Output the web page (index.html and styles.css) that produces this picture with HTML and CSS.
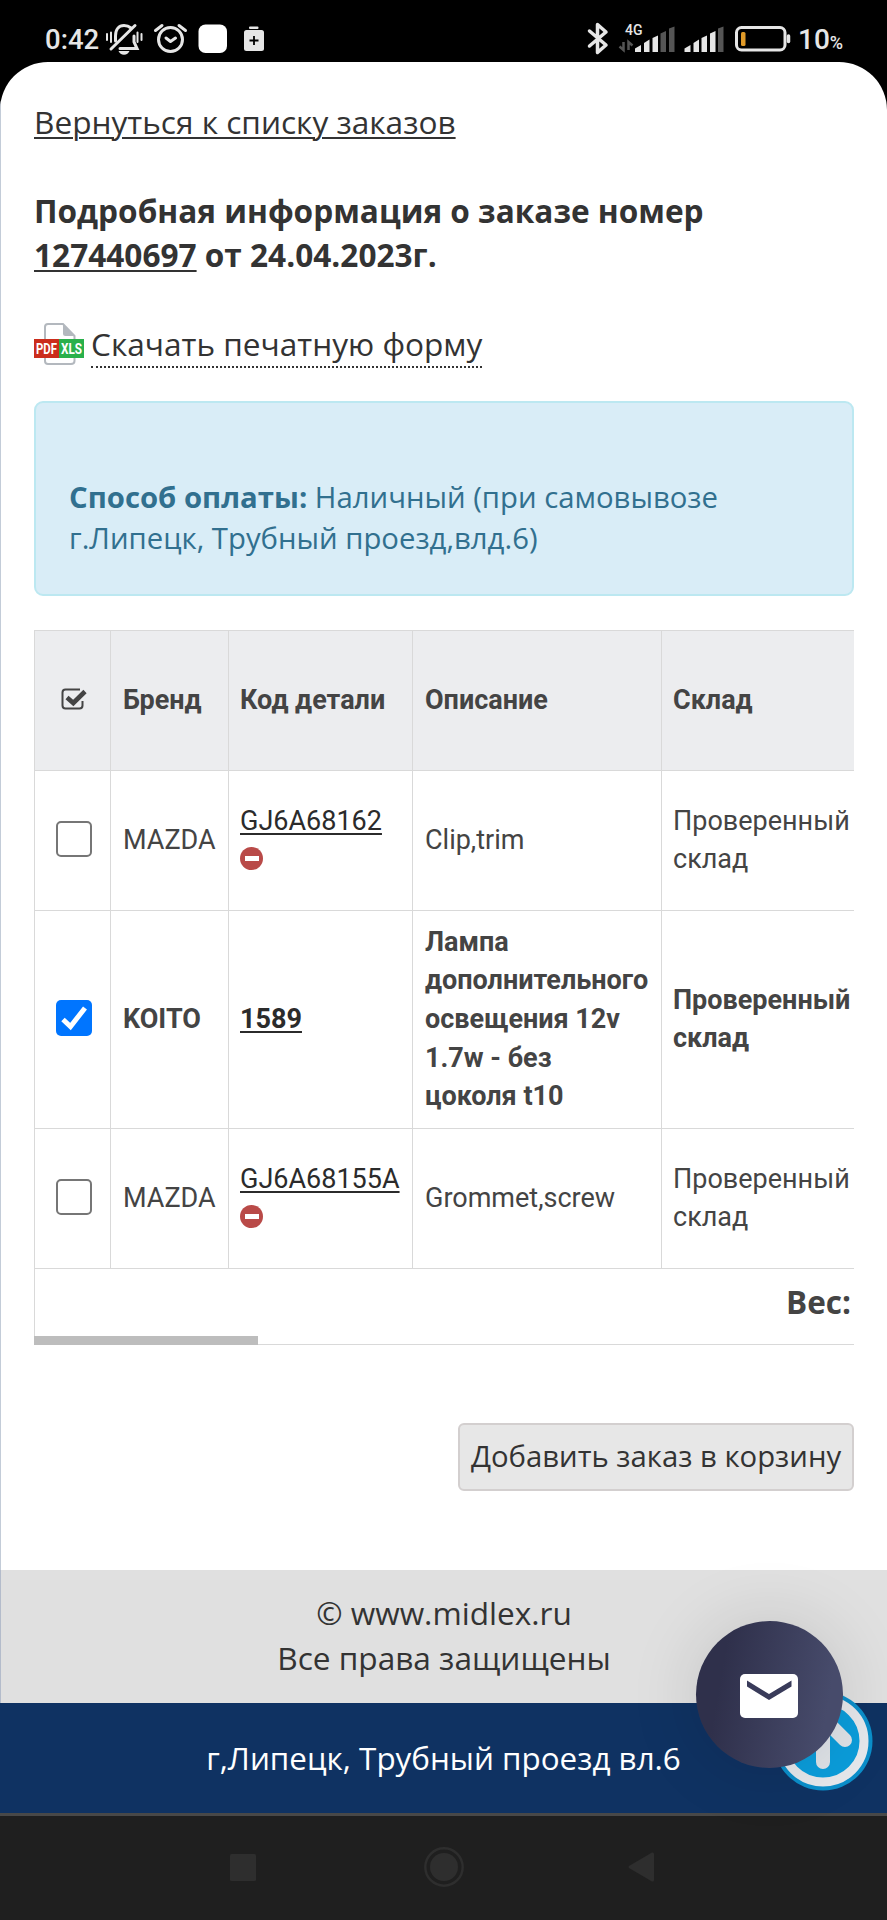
FILE: index.html
```html
<!DOCTYPE html>
<html lang="ru">
<head>
    <meta charset="UTF-8">
    <meta name="viewport" content="width=device-width, initial-scale=1.0">
    <title>Заказ 127440697</title>
    <link rel="stylesheet" href="styles.css">
</head>
<body>
    <div class="status-bar">
        <span class="clock">0:42</span>
        <svg class="status-left" width="160" height="36" viewBox="105 21 160 36">
            <!-- muted bell -->
            <g fill="none" stroke="#e6e6e6" stroke-width="3" stroke-linecap="round">
                <path d="M115.500 41V36C115.500 29 119 25.500 124 25.500Q128 25.500 131 28M134 36V42L137 48.500H120"/>
                <path d="M111 49L135 25.500"/>
                <path d="M107 34V40M111 32.500V42M137.500 32.500V42M141.500 34V40" stroke-width="2"/>
            </g>
            <path d="M118.500 51H129.500Q128 54.700 124 54.700Q120 54.700 118.500 51Z" fill="#e6e6e6"/>
            <!-- alarm -->
            <circle cx="170.500" cy="39.500" r="12" fill="none" stroke="#e6e6e6" stroke-width="3"/>
            <path d="M155.500 30.500L162 25.500M185.500 30.500L179 25.500" stroke="#e6e6e6" stroke-width="3" stroke-linecap="round"/>
            <path d="M166 38L170.500 41.500L175.500 38" fill="none" stroke="#e6e6e6" stroke-width="3" stroke-linecap="round" stroke-linejoin="round"/>
            <rect x="198.500" y="24.500" width="28.500" height="28.500" rx="7" fill="#fff"/>
            <!-- battery saver -->
            <rect x="249" y="26.500" width="9.500" height="2.500" rx="1" fill="#e6e6e6"/>
            <rect x="244" y="30" width="20" height="21" rx="2.500" fill="#e6e6e6"/>
            <path d="M254 36V45M249.500 40.500H258.500" stroke="#000" stroke-width="1.800"/>
        </svg>
        <svg class="status-right" width="206" height="36" viewBox="586 21 206 36">
            <path d="M589.500 31L606 45L597.500 52.500V24.500L606 32L589.500 46" fill="none" stroke="#e6e6e6" stroke-width="3.500" stroke-linecap="round" stroke-linejoin="round"/>
            <text class="net" x="625" y="35">4G</text>
            <path d="M623.500 42V50L619.500 46.500M628.500 50V42L632.500 45.500" fill="none" stroke="#555" stroke-width="2.500"/>
            <g fill="#e6e6e6">
                <path d="M635 52V48.500L641 45V52Z"/>
                <path d="M644 52V43L649.500 39.500V52Z"/>
                <path d="M652.500 52V38L658 35.500V52Z"/>
                <path d="M684.500 52V48.500L690.500 45V52Z"/>
                <path d="M693.500 52V43L699 39.500V52Z"/>
                <path d="M701.500 52V38L707 35.500V52Z"/>
                <path d="M710 52V33.500L715.500 31V52Z"/>
            </g>
            <g fill="#555">
                <path d="M660.500 52V33.500L666 31V52Z"/>
                <path d="M669 52V28.500L674.500 26.500V52Z"/>
                <path d="M718 52V28.500L723.500 26.500V52Z"/>
            </g>
            <!-- battery -->
            <rect x="736.500" y="27.500" width="48.500" height="22.500" rx="5" fill="none" stroke="#e6e6e6" stroke-width="3"/>
            <rect x="741" y="32" width="4.500" height="14" rx="1.500" fill="#e09a28"/>
            <path d="M788.500 36V41.500" stroke="#e6e6e6" stroke-width="3.500" stroke-linecap="round"/>
        </svg>
        <span class="charge">10<small>%</small></span>
    </div>

    <div class="screen">
        <main class="content">
            <a class="back" href="#">Вернуться к списку заказов</a>
            <h1>Подробная информация о заказе номер<br><a href="#">127440697</a> от 24.04.2023г.</h1>

            <div class="download">
                <svg width="50" height="42" viewBox="0 0 50 42">
                    <path d="M11 20V4Q11 1 14 1H29L40.500 13V38Q40.500 41 37 41H14Q11 41 11 38Z" fill="#fff" stroke="#b3b8be" stroke-width="2"/>
                    <path d="M29 1L41 13H31.500Q29 13 29 10.500Z" fill="#b3b8be"/>
                    <path d="M0 16H25V35H0Z" fill="#cb2d1c"/>
                    <path d="M25 16H50V35H25Z" fill="#29b04b"/>
                    <text x="2" y="30.500" textLength="21" lengthAdjust="spacingAndGlyphs">PDF</text>
                    <text x="27" y="30.500" textLength="21" lengthAdjust="spacingAndGlyphs">XLS</text>
                </svg>
                <a href="#">Скачать печатную форму</a>
            </div>

            <div class="alert">
                <b>Способ оплаты:</b> Наличный (при самовывозе<br>г.Липецк, Трубный проезд,влд.6)
            </div>

            <div class="table-wrap">
                <table>
                    <colgroup>
                        <col class="col-check"><col class="col-brand"><col class="col-code"><col class="col-desc"><col class="col-stock">
                    </colgroup>
                    <tr class="head">
                        <th class="check">
                            <svg width="26" height="22" viewBox="0 0 26 22">
                                <path d="M19 1.500H4.500Q1.500 1.500 1.500 4.500V17.500Q1.500 20.500 4.500 20.500H18.500Q21.500 20.500 21.500 17.500V13" fill="none" stroke="#444" stroke-width="2"/>
                                <path d="M6 9.500L12.300 15L24 3.500" fill="none" stroke="#444" stroke-width="4.600"/>
                            </svg>
                        </th>
                        <th>Бренд</th>
                        <th class="code">Код детали</th>
                        <th>Описание</th>
                        <th class="stock">Склад</th>
                    </tr>
                    <tr class="row">
                        <td class="check"><span class="box"></span></td>
                        <td>MAZDA</td>
                        <td class="code"><a href="#">GJ6A68162</a><br><i class="minus"></i></td>
                        <td>Clip,trim</td>
                        <td class="stock">Проверенный<br>склад</td>
                    </tr>
                    <tr class="row-big">
                        <td class="check">
                            <span class="box checked">
                                <svg width="36" height="36" viewBox="0 0 36 36"><path d="M7 19.500L14.500 26.500L29 8" fill="none" stroke="#fff" stroke-width="5"/></svg>
                            </span>
                        </td>
                        <td>KOITO</td>
                        <td class="code"><a href="#">1589</a></td>
                        <td>Лампа<br>дополнительного<br>освещения 12v<br>1.7w - без<br>цоколя t10</td>
                        <td class="stock">Проверенный<br>склад</td>
                    </tr>
                    <tr class="row">
                        <td class="check"><span class="box"></span></td>
                        <td>MAZDA</td>
                        <td class="code"><a href="#">GJ6A68155A</a><br><i class="minus"></i></td>
                        <td>Grommet,screw</td>
                        <td class="stock">Проверенный<br>склад</td>
                    </tr>
                    <tr class="total">
                        <td colspan="5">Вес:</td>
                    </tr>
                </table>
                <div class="scrollbar"></div>
            </div>

            <button class="to-cart">Добавить заказ в корзину</button>
        </main>

        <footer>
            <div class="copyright">© www.midlex.ru<br>Все права защищены</div>
            <div class="address">г,Липецк, Трубный проезд вл.6</div>
        </footer>
    </div>

    <div class="nav-bar">
        <svg width="26" height="27" viewBox="0 0 26 27"><rect width="26" height="27" rx="1.500" fill="#2e2e2e"/></svg>
        <svg class="home" width="40" height="40" viewBox="0 0 40 40"><circle cx="20" cy="20" r="18.700" fill="none" stroke="#2e2e2e" stroke-width="2.400"/><circle cx="20" cy="20" r="14" fill="#2e2e2e"/></svg>
        <svg width="26" height="30" viewBox="0 0 26 30"><path d="M1 14L24 .500Q26 0 26 2V28Q26 30 24 29.500L1 16Q0 15 1 14Z" fill="#2e2e2e"/></svg>
    </div>

    <svg class="to-top" width="100" height="100" viewBox="0 0 100 100">
        <circle cx="50" cy="50" r="49.500" fill="#0b8fcb"/>
        <circle cx="50" cy="50" r="41" fill="#0b9ddb" stroke="#e6e8ec" stroke-width="9"/>
        <path d="M50 71V28M26 51L50 27L72 49" fill="none" stroke="#dfe3e8" stroke-width="14" stroke-linecap="round" stroke-linejoin="round"/>
    </svg>
    <div class="mail">
        <svg width="58" height="44" viewBox="0 0 58 44">
            <rect width="58" height="44" rx="5" fill="#fff"/>
            <path d="M7 6.500L29 20L51.500 6.500V12.500L29 26L7 12.500Z" fill="#393b5a"/>
        </svg>
    </div>
</body>
</html>
```
FILE: styles.css
```css
* {
    box-sizing: border-box;
}
body {
    margin: 0;
    width: 887px;
    height: 1920px;
    overflow: hidden;
    position: relative;
    background: #000;
    color: #333;
    font-family: "Open Sans", "Noto Sans", sans-serif;
    font-size: 31.6px;
    font-weight: 400;
    line-height: 44.5px;
}
a {
    color: inherit;
    text-underline-offset: 3px;
    text-decoration-thickness: 2px;
}
svg {
    display: block;
    flex: none;
}

/* status bar */
.status-bar {
    display: flex;
    align-items: flex-start;
    height: 62px;
    padding: 21px 0 0 45px;
    color: #e6e6e6;
    font-family: Roboto, sans-serif;
    font-weight: 500;
}
.clock {
    width: 60px;
    font-size: 27.5px;
    line-height: 37px;
}
.status-right {
    margin-left: 321px;
}
.net {
    fill: #e6e6e6;
    font-size: 14px;
}
.charge {
    margin-left: 6px;
    font-size: 28px;
    line-height: 37px;
}
.charge small {
    font-size: 18px;
}

/* page */
.screen {
    height: 1751px;
    border-radius: 48px 48px 0 0;
    background: #fff;
    overflow: hidden;
}
.content {
    display: flex;
    flex-direction: column;
    align-items: flex-start;
    height: 1508px;
    padding: 38px 33px 0;
    border-left: 1px solid #c3ccd8;
}
h1 {
    margin: 44px 0;
    font-size: 31.6px;
    font-weight: 700;
}
.download {
    display: flex;
    align-items: flex-start;
    gap: 7px;
    height: 45px;
}
.download svg {
    margin-top: 1px;
}
.download text {
    fill: #fff;
    font-family: Roboto, sans-serif;
    font-size: 14.5px;
    font-weight: 700;
}
.download a {
    height: 46px;
    border-bottom: 2px dotted #333;
    text-decoration: none;
}
.alert {
    width: 820px;
    height: 195px;
    margin-top: 34px;
    padding: 74px 33px 0;
    border: 2px solid #bce8f1;
    border-radius: 9px;
    background: #d9edf7;
    color: #31708f;
    font-size: 29.3px;
    line-height: 41px;
}
.alert b {
    font-weight: 700;
}

/* order table */
.table-wrap {
    width: 820px;
    height: 715px;
    margin-top: 34px;
    position: relative;
    overflow: hidden;
}
table {
    width: 836px;
    table-layout: fixed;
    border-collapse: collapse;
    color: #444;
    font-family: Roboto, sans-serif;
    font-size: 27px;
    line-height: 38.6px;
}
.col-check { width: 76px; }
.col-brand { width: 118px; }
.col-code { width: 184px; }
.col-desc { width: 249px; }
.col-stock { width: 209px; }
th, td {
    padding: 0 0 0 12px;
    border: 1.5px solid #d9d9d9;
    text-align: left;
    vertical-align: middle;
    white-space: nowrap;
}
.code, .stock {
    padding-left: 11px;
}
.head {
    height: 140px;
    background: #ecedef;
}
.row {
    height: 140.5px;
}
.row-big {
    height: 217.5px;
    font-weight: 700;
}
td a {
    color: #2b2b2b;
}
.check {
    padding: 0 0 2px 2px;
}
.check svg {
    margin: 0 auto;
}
.box {
    display: block;
    width: 36px;
    height: 36px;
    margin: 0 auto;
    border: 2px solid #767676;
    border-radius: 5px;
}
.checked {
    border: 0;
    background: #0075ff;
}
.minus {
    display: inline-block;
    width: 23px;
    height: 23px;
    border-radius: 50%;
    background: linear-gradient(#fff, #fff) center / 14px 5px no-repeat #b94a48;
    vertical-align: -2px;
}
.total {
    height: 75.5px;
}
.total td {
    padding: 0 19px 7px 0;
    font-family: "Open Sans", "Noto Sans", sans-serif;
    font-size: 31.5px;
    font-weight: 700;
    text-align: right;
}
.scrollbar {
    position: absolute;
    left: 0;
    bottom: 0;
    width: 224px;
    height: 9px;
    background: #bdbdbd;
}
.to-cart {
    width: 396px;
    height: 68px;
    margin: 78px 0 0 auto;
    padding: 0 0 2px;
    border: 2px solid #d3cfcf;
    border-radius: 6px;
    background: #e7e7e7;
    color: #333;
    font: 400 29.3px "Open Sans", "Noto Sans", sans-serif;
    white-space: nowrap;
}

/* footer */
.copyright {
    height: 133px;
    padding-top: 21px;
    border-left: 1px solid #b4bccb;
    background: #e0e0e0;
    text-align: center;
}
.address {
    height: 110px;
    padding-top: 33px;
    background: #0f3262;
    color: #fff;
    text-align: center;
    font-size: 31.4px;
}
.nav-bar {
    display: flex;
    justify-content: space-between;
    align-items: center;
    height: 107px;
    padding: 0 233px 2px 230px;
    border-top: 3px solid #484848;
    background: #1f1f1f;
}
.home {
    margin-left: 3px;
}

/* floating buttons */
.to-top {
    position: absolute;
    left: 773px;
    top: 1691px;
}
.mail {
    position: absolute;
    left: 696px;
    top: 1621px;
    width: 147px;
    height: 147px;
    padding: 53px 0 0 44px;
    border-radius: 50%;
    background: linear-gradient(100deg, #2f304b 20%, #474b6b 85%);
    box-shadow: 0 0 70px rgba(0, 0, 0, .13);
}
```
